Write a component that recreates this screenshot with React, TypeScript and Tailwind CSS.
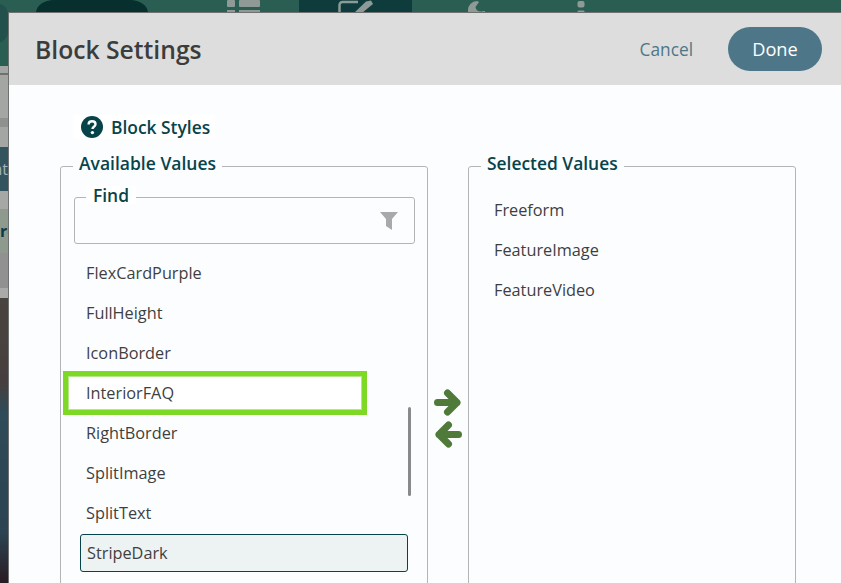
const items = ["FlexCardPurple", "FullHeight", "IconBorder"];
const items2 = ["RightBorder", "SplitImage", "SplitText"];
const selected = ["Freeform", "FeatureImage", "FeatureVideo"];

function Arrow({ flip, className }: { flip?: boolean; className: string }) {
  return (
    <svg width="27" height="27" viewBox="0 0 27 27" className={className}>
      <g transform={flip ? "translate(27 0) scale(-1 1)" : undefined}>
        <path d="M3.5 13.5H23M13.5 4L23 13.5L13.5 23" fill="none" stroke="#4f7a3a" strokeWidth="7" strokeLinecap="round" strokeLinejoin="round" />
      </g>
    </svg>
  );
}

function TopBar() {
  return (
    <div className="relative h-[66px] bg-[#2b5e52] pl-9 flex items-start shrink-0 overflow-hidden">
      <div className="absolute -left-[16px] top-[3px] w-[24px] h-[40px] rounded-full bg-[#22504a]" />
      <div className="w-[112px] h-[13px] rounded-[18px_18px_0_0/13px_13px_0_0] bg-[#062f2e]" />
      <svg width="34" height="13" viewBox="0 0 34 13" className="ml-[78px]">
        <rect x="1" y="0" width="8" height="7" rx="1" fill="#8f9a96" />
        <rect x="13" y="0" width="21" height="7" rx="1" fill="#8f9a96" />
        <rect x="1" y="10" width="8" height="3" fill="#8f9a96" />
        <rect x="13" y="10" width="21" height="3" fill="#8f9a96" />
      </svg>
      <div className="ml-[39px] w-[113px] h-[13px] bg-[#0e3c3c] pl-[39px]">
        <svg width="36" height="13" viewBox="0 0 36 13">
          <path d="M1.5 13V5a3 3 0 0 1 3-3H20" fill="none" stroke="#8f9a96" strokeWidth="2.5" />
          <path d="M16 13L28 1.5L33 0.5L35 4L24 13Z" fill="#8f9a96" />
        </svg>
      </div>
      <svg width="18" height="13" viewBox="0 0 18 13" className="ml-[55px]">
        <path d="M10 1A9 9 0 0 0 1 10V13H18V11L14 11.5A5 5 0 0 1 8.5 7L12 2Z" fill="#8f9a96" />
      </svg>
      <svg width="8" height="13" viewBox="0 0 8 13" className="ml-[92px]">
        <rect x="0.5" y="1" width="7" height="6.5" rx="2" fill="#8f9a96" />
        <rect x="0.5" y="10.5" width="7" height="2.5" rx="1" fill="#8f9a96" />
      </svg>
    </div>
  );
}

function Background() {
  return (
    <div className="absolute inset-0 flex flex-col">
      <TopBar />
      <div className="h-[7px] bg-[#a4a6a4]" />
      <div className="h-[2px] bg-[#6f7170]" />
      <div className="h-[43px] bg-[#a4a6a4]" />
      <div className="h-[9px] bg-[#8f918f]" />
      <div className="h-[20px] bg-[#a4a6a4]" />
      <div className="h-[44px] bg-[#33545f] w-[8px] overflow-hidden flex justify-end items-center text-[16px] text-[#a6b4ba]">nt</div>
      <div className="h-[18px] bg-[#a6a8a6]" />
      <div className="h-[44px] bg-[#8f9a8e] w-[8px] overflow-hidden flex items-center text-[16px] font-bold text-[#0b3a44] whitespace-nowrap">re</div>
      <div className="h-[35px] bg-[#919191]" />
      <div className="h-[10px] bg-[#a9aaa9]" />
      <div className="flex-1 bg-[linear-gradient(#4a4440_0%,#463f3f_30%,#2f4a58_40%,#2c4452_82%,#2a1c24_100%)]" />
    </div>
  );
}

export default function App() {
  return (
    <div className="relative w-[841px] h-[583px] overflow-hidden font-['Open_Sans',sans-serif]">
      <Background />
      <div className="absolute left-[8px] top-[12px] w-[833px] h-[571px] border-l border-t border-[#6e716f] bg-[#fcfdff] flex flex-col">
        <header className="h-[72px] bg-[#dddddd] flex items-center justify-between pl-[26px] pr-[19px] shrink-0">
          <h1 className="text-[24.7px] font-semibold text-[#3c3c3c] translate-y-[1px]">Block Settings</h1>
          <div className="flex items-center gap-[35px]">
            <span className="text-[17.3px] text-[#4d7789] translate-y-[1px]">Cancel</span>
            <button className="w-[94px] h-[44px] pt-[2px] rounded-[22px] bg-[#4d7789] text-[18.2px] text-white">Done</button>
          </div>
        </header>
        <div className="flex-1 pl-[51px] pr-[45px] pt-[30px]">
          <div className="flex items-center ml-[13px] pl-[7px] w-[142px] h-[24px] bg-white">
            <svg width="24" height="24" viewBox="0 0 24 24">
              <circle cx="12" cy="12" r="11" fill="#07444a" />
              <path d="M8.6 9.4c0-2 1.5-3.2 3.5-3.2s3.4 1.2 3.4 3c0 2.6-3 2.5-3 4.7" fill="none" stroke="#fcfdff" strokeWidth="2.4" />
              <circle cx="12.4" cy="17.6" r="1.7" fill="#fcfdff" />
            </svg>
            <span className="ml-[7px] text-[17.4px] font-semibold text-[#07444a] whitespace-nowrap">Block Styles</span>
          </div>
          <div className="flex mt-[27px]">
            <fieldset className="w-[368px] h-[430px] border border-[#b4b4b4] rounded-[3px] -mt-[9px] min-w-0 p-0">
              <legend className="ml-[12px] px-[6px] text-[17.5px] leading-[18px] font-semibold text-[#07444a] -translate-y-[3px]">Available Values</legend>
              <div className="px-[13px]">
                <fieldset className="h-[56px] w-[341px] border border-[#b4b4b4] rounded-[3px] relative min-w-0 mt-[13px] p-0">
                  <legend className="ml-[11px] px-[7px] text-[17.4px] leading-[18px] font-semibold text-[#07444a] bg-white -translate-y-[2px]">Find</legend>
                  <svg width="18" height="18" viewBox="0 0 18 18" className="absolute right-[16px] top-[6px]">
                    <path d="M0 0H18L12 7V18L6 14V7Z" fill="#a9a9a9" />
                  </svg>
                </fieldset>
                <div className="relative mt-[9px] flex flex-col">
                  {items.map((t) => (
                    <div key={t} className="h-[40px] flex items-center pl-[12px] text-[16.3px] text-[#3f3f3f]">{t}</div>
                  ))}
                  <div className="w-[304px] h-[44px] -my-[2px] -ml-[11px] border-[5px] border-[#7ed826] bg-white flex items-center pl-[18px] text-[16.3px] text-[#3f3f3f] outline outline-1 -outline-offset-[6px] outline-[#b6e58a]">InteriorFAQ</div>
                  {items2.map((t) => (
                    <div key={t} className="h-[40px] flex items-center pl-[12px] text-[16.3px] text-[#3f3f3f]">{t}</div>
                  ))}
                  <div className="w-[328px] h-[38px] ml-[6px] mt-[1px] rounded-[3px] border border-[#07444a] bg-[#edf3f2] flex items-center pl-[6px] text-[16.3px] text-[#3f3f3f]">StripeDark</div>
                  <div className="absolute left-[334px] top-[154px] w-[3px] h-[89px] rounded-[2px] bg-[#8a8a8a]" />
                </div>
              </div>
            </fieldset>
            <div className="w-[40px] flex flex-col pt-[223px] gap-[5px]">
              <Arrow className="ml-[6px]" />
              <Arrow flip className="ml-[7px]" />
            </div>
            <fieldset className="w-[328px] h-[430px] border border-[#b4b4b4] rounded-[3px] -mt-[9px] min-w-0 p-0">
              <legend className="ml-[12px] px-[6px] text-[17.4px] leading-[18px] font-semibold text-[#07444a] -translate-y-[3px]">Selected Values</legend>
              <div className="flex flex-col mt-[15px] pl-[25px]">
                {selected.map((t) => (
                  <div key={t} className="h-[40px] flex items-center text-[16.3px] text-[#3f3f3f]">{t}</div>
                ))}
              </div>
            </fieldset>
          </div>
        </div>
      </div>
    </div>
  );
}
